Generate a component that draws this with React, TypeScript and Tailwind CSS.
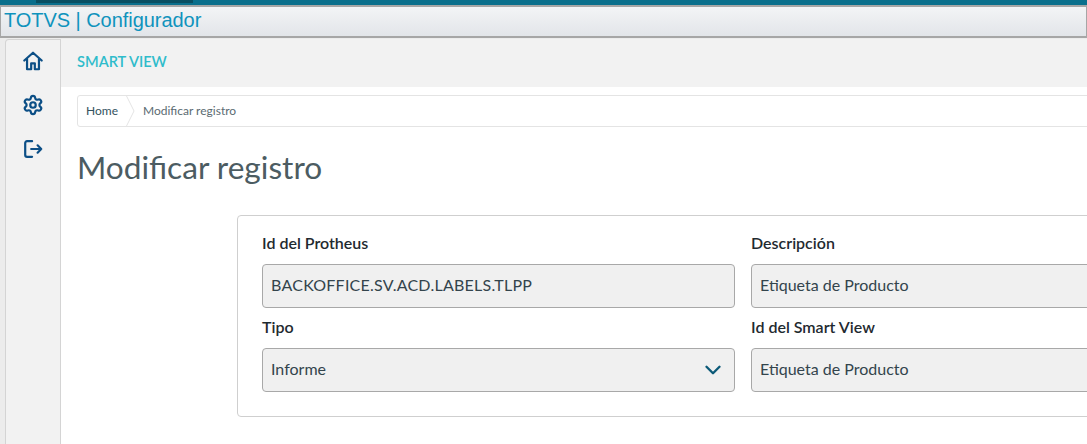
import { ChevronDown, Settings } from "lucide-react";

// Read-only field used across the form
function Field({ label, value, select, wide }: { label: string; value: string; select?: boolean; wide?: boolean }) {
  return (
    <div className="w-[473px] shrink-0">
      <label className="block h-[24px] text-[16px] leading-[22px] font-semibold text-[#1f2a30]">{label}</label>
      <div className="mt-[8px] flex h-[44px] items-center justify-between rounded-[4px] border border-[#a8a8a8] bg-[#f0f0f0] pb-[2px] pl-[8px] pr-[8px] text-[16px] text-[#33444c]">
        <span className={wide ? "tracking-[0.24px]" : ""}>{value}</span>
        {select && <ChevronDown className="mt-[2px] h-[26px] w-[26px] text-[#0c5a78]" strokeWidth={2.2} />}
      </div>
    </div>
  );
}

function HomeIcon() {
  return (
    <svg className="h-[22px] w-[22px] text-[#0c4f86]" viewBox="0 0 24 24" fill="none" stroke="currentColor" strokeWidth={2.4} strokeLinecap="round" strokeLinejoin="round">
      <path d="M2.5 11.5 L12 3 L21.5 11.5 M5.5 9.5 V21 H10 V14.5 H14 V21 H18.5 V9.5" />
    </svg>
  );
}

function ExitIcon() {
  return (
    <svg className="h-[22px] w-[22px] text-[#0c4f86]" viewBox="0 0 24 24" fill="none" stroke="currentColor" strokeWidth={2.4} strokeLinecap="round" strokeLinejoin="round">
      <path d="M11 3.5 H5.5 a2 2 0 0 0 -2 2 V18.5 a2 2 0 0 0 2 2 H11 M10 12 H21 M17 8 L21 12 L17 16" />
    </svg>
  );
}

export default function App() {
  return (
    <div className="flex h-[444px] w-[1087px] flex-col overflow-hidden bg-white font-['Lato',sans-serif]">
      {/* Window chrome */}
      <div className="h-[5px] shrink-0 bg-[#0a6f8c]">
        <div className="ml-[36px] h-[3px] w-[157px] bg-[#0a4f62]" />
      </div>
      <div className="flex h-[33px] shrink-0 items-start border-x border-y-2 border-x-[#a6a6a6] border-y-[#a6a6a6] bg-gradient-to-b from-[#f3f4f6] to-[#e2e5e9] pl-[3px] pt-[1px] font-['Liberation_Sans',sans-serif] text-[20px] leading-[24px] text-[#0f93bd]">
        <span className="tracking-[-0.05px]">TOTVS | Configurador</span>
      </div>

      <div className="flex min-h-0 flex-1 bg-[#ececec] pl-[5px] pt-px">
        {/* Side menu */}
        <nav className="flex w-[56px] shrink-0 flex-col items-center gap-[22px] rounded-tl-[4px] border border-b-0 border-[#d4d4d4] bg-[#f2f2f2] pt-[10px]">
          <HomeIcon />
          <Settings className="h-[22px] w-[22px] text-[#0c4f86]" strokeWidth={2.4} />
          <ExitIcon />
        </nav>

        <main className="min-w-0 flex-1 bg-white">
          <header className="flex h-[48px] items-center bg-[#f2f2f2] pb-[2px] pl-[16px] text-[14.6px] font-semibold text-[#2fbccb]">
            SMART VIEW
          </header>

          <div className="pl-[16px] pt-[8px]">
            {/* Breadcrumb */}
            <div className="flex h-[32px] w-[1100px] items-center rounded-[3px] border border-[#e4e4e4] text-[12px]">
              <span className="pl-[8px] text-[#33525e]">Home</span>
              <svg className="ml-[8px] h-[30px] w-[9px] shrink-0" viewBox="0 0 9 30" fill="none">
                <path d="M0.5 0 L8 15 L0.5 30" stroke="#e4e4e4" />
              </svg>
              <span className="ml-[8px] text-[#5b6b72]">Modificar registro</span>
            </div>

            <h1 className="mt-[16px] text-[31.6px] leading-[48px] text-[#4c5c62]">Modificar registro</h1>

            {/* Form card */}
            <section className="ml-[160px] mt-[24px] h-[202px] w-[1000px] rounded-[4px] border border-[#cfcfcf] bg-white pl-[24px] pt-[16px]">
              <div className="flex gap-[16px]">
                <Field label="Id del Protheus" value="BACKOFFICE.SV.ACD.LABELS.TLPP" wide />
                <Field label="Descripción" value="Etiqueta de Producto" />
              </div>
              <div className="mt-[8px] flex gap-[16px]">
                <Field label="Tipo" value="Informe" select />
                <Field label="Id del Smart View" value="Etiqueta de Producto" />
              </div>
            </section>
          </div>
        </main>
      </div>
    </div>
  );
}
